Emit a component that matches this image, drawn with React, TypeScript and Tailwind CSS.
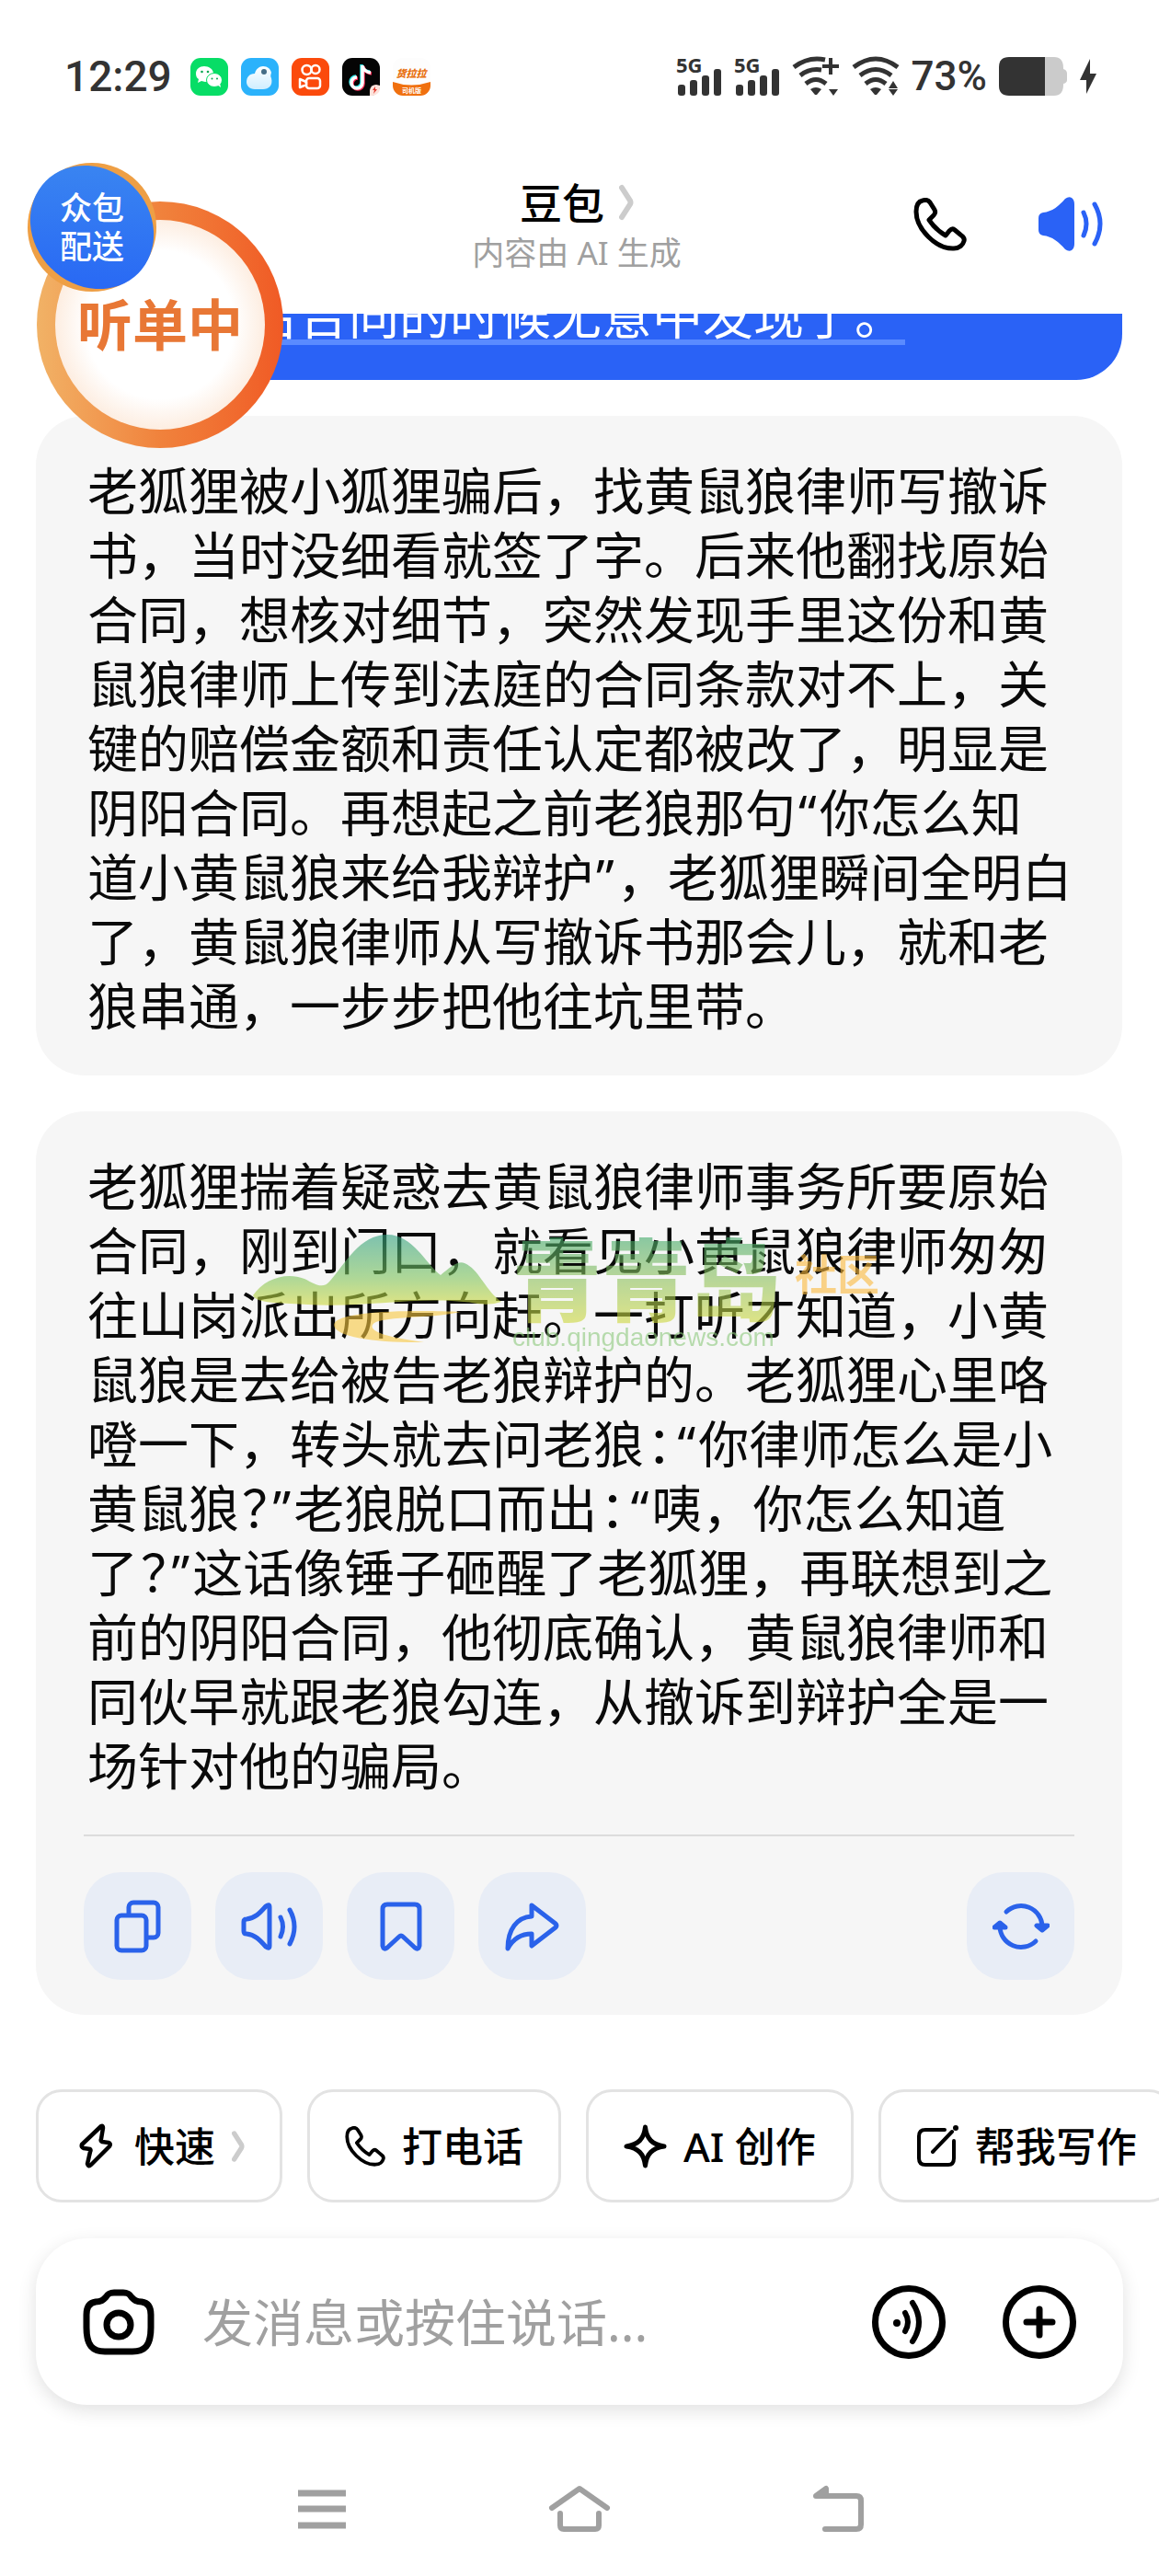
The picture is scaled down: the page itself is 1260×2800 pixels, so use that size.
import type { ReactNode } from "react";

const firstMessage = [
  "老狐狸被小狐狸骗后，找黄鼠狼律师写撤诉",
  "书，当时没细看就签了字。后来他翻找原始",
  "合同，想核对细节，突然发现手里这份和黄",
  "鼠狼律师上传到法庭的合同条款对不上，关",
  "键的赔偿金额和责任认定都被改了，明显是",
  "阴阳合同。再想起之前老狼那句“你怎么知",
  "道小黄鼠狼来给我辩护”，老狐狸瞬间全明白",
  "了，黄鼠狼律师从写撤诉书那会儿，就和老",
  "狼串通，一步步把他往坑里带。",
];

const secondMessage = [
  "老狐狸揣着疑惑去黄鼠狼律师事务所要原始",
  "合同，刚到门口，就看见小黄鼠狼律师匆匆",
  "往山岗派出所方向赶。一打听才知道，小黄",
  "鼠狼是去给被告老狼辩护的。老狐狸心里咯",
  "噔一下，转头就去问老狼：“你律师怎么是小",
  "黄鼠狼？”老狼脱口而出：“咦，你怎么知道",
  "了？”这话像锤子砸醒了老狐狸，再联想到之",
  "前的阴阳合同，他彻底确认，黄鼠狼律师和",
  "同伙早就跟老狼勾连，从撤诉到辩护全是一",
  "场针对他的骗局。",
];

interface IconProps {
  className?: string;
}

function PhoneIcon({ className }: IconProps) {
  return (
    <svg viewBox="0 0 58 58" className={className} fill="none" stroke="currentColor" strokeWidth="5" strokeLinejoin="round">
      <path d="M10 3C5 4 3 9 3 15C3 34 25 56 44 55C50 55 54 51 55 47C56 44 54 42 51 40L45 35C43 33 41 34 39 36L35 41C28 37 21 30 17 24L22 19C24 17 24 15 23 13L18 5C16 2 13 2 10 3Z" />
    </svg>
  );
}

function SpeakerSolidIcon({ className }: IconProps) {
  return (
    <svg viewBox="0 0 71 59" className={className} fill="none" stroke="currentColor" strokeWidth="5" strokeLinecap="round">
      <path
        stroke="none"
        fill="currentColor"
        d="M0 23Q0 18 5 17C15 16 22 10 29 2Q33-1 36 1Q39 3 39 8V51Q39 56 36 58Q33 60 29 57C22 49 15 43 5 42Q0 41 0 36Z"
      />
      <path d="M49 17Q55 29 49 42M61 8Q73 29 61 51" />
    </svg>
  );
}

function ChevronIcon({ className }: IconProps) {
  return (
    <svg viewBox="0 0 16 40" className={className} fill="none" stroke="#cccccc" strokeWidth="6" strokeLinecap="round" strokeLinejoin="round">
      <path d="M3 4L12 18Q13 20 12 22L3 36" />
    </svg>
  );
}

function CopyIcon() {
  return (
    <svg viewBox="0 0 52 58" className="h-[58px] w-[52px]" fill="none" stroke="currentColor" strokeWidth="5">
      <rect x="3" y="17" width="32" height="38" rx="5" />
      <path d="M16 15V8a5 5 0 0 1 5-5H43a5 5 0 0 1 5 5V36a5 5 0 0 1-5 5H37" />
    </svg>
  );
}

function SpeakerIcon() {
  return (
    <svg viewBox="0 0 62 52" className="h-[52px] w-[62px]" fill="none" stroke="currentColor" strokeWidth="5" strokeLinecap="round" strokeLinejoin="round">
      <path d="M3 21Q3 18 6 18C15 17 20 12 27 4Q31 1 31 5V47Q31 51 27 48C20 40 15 35 6 34Q3 34 3 31Z" />
      <path d="M43 16Q48 26 43 37M53 8Q63 26 53 45" />
    </svg>
  );
}

function BookmarkIcon() {
  return (
    <svg viewBox="0 0 46 54" className="h-[54px] w-[46px]" fill="none" stroke="currentColor" strokeWidth="5" strokeLinejoin="round">
      <path d="M8 3H38Q43 3 43 8V48Q42 53 38 50L25 38Q23 36 21 38L8 50Q4 53 3 48V8Q3 3 8 3Z" />
    </svg>
  );
}

function ShareIcon() {
  return (
    <svg viewBox="0 0 60 54" className="h-[54px] w-[60px]" fill="none" stroke="currentColor" strokeWidth="5" strokeLinejoin="round">
      <path d="M29 4L55 24Q57 26 55 28L29 48V35C17 35 9 40 3 51C3 30 13 17 29 16Z" />
    </svg>
  );
}

function RefreshIcon() {
  return (
    <svg viewBox="0 0 62 52" className="h-[52px] w-[62px]" fill="none" stroke="currentColor" strokeWidth="5" strokeLinecap="round" strokeLinejoin="round">
      <path d="M15 10A23 23 0 0 1 54 26M47 42A23 23 0 0 1 8 26" />
      <path d="M48 25H60L54 30ZM2 27H14L8 22Z" fill="currentColor" />
    </svg>
  );
}

function BoltIcon() {
  return (
    <svg viewBox="0 0 48 49" className="h-[49px] w-12" fill="none" stroke="currentColor" strokeWidth="4.5" strokeLinejoin="round">
      <path d="M30 3L9 23Q8 26 11 27L18 28Q19 29 18 31L15 44Q16 48 19 45L39 25Q41 22 38 21L31 20Q29 19 30 17L32 5Q32 2 30 3Z" />
    </svg>
  );
}

function SparkleIcon() {
  return (
    <svg viewBox="0 0 47 48" className="h-12 w-[47px]" fill="none" stroke="currentColor" strokeWidth="5" strokeLinejoin="round">
      <path d="M23.5 3C25 16 31 22 44 24C31 26 25 32 23.5 45C22 32 16 26 3 24C16 22 22 16 23.5 3Z" />
    </svg>
  );
}

function EditIcon() {
  return (
    <svg viewBox="0 0 46 46" className="h-[46px] w-[46px]" fill="none" stroke="currentColor" strokeWidth="4" strokeLinecap="round">
      <path d="M31 5H10Q3 5 3 12V36Q3 43 10 43H35Q41 43 41 36V17" />
      <path d="M18 29L39 7" />
      <circle cx="43" cy="3" r="3" fill="currentColor" stroke="none" />
    </svg>
  );
}

function CameraIcon() {
  return (
    <svg viewBox="0 0 78 72" className="h-[72px] w-[78px]" fill="none" stroke="currentColor" strokeWidth="7" strokeLinejoin="round">
      <path d="M14 14C20 14 22 12 25 9C28 4 31 4 34 4H44C47 4 50 4 53 9C56 12 58 14 64 14C71 15 74 20 74 28V42C74 62 67 68 54 68H24C11 68 4 62 4 42V28C4 20 7 15 14 14Z" />
      <circle cx="39" cy="39" r="13" />
    </svg>
  );
}

function VoiceIcon() {
  return (
    <svg viewBox="0 0 80 80" className="h-20 w-20" fill="none" stroke="currentColor" strokeWidth="6" strokeLinecap="round">
      <circle cx="40" cy="40" r="36.5" strokeWidth="7" />
      <circle cx="27" cy="41" r="4" fill="currentColor" stroke="none" />
      <path d="M36 30Q42 40 36 50M44 19Q58 40 44 61" />
    </svg>
  );
}

function PlusIcon() {
  return (
    <svg viewBox="0 0 80 80" className="h-20 w-20" fill="none" stroke="currentColor" strokeWidth="7" strokeLinecap="round">
      <circle cx="40" cy="40" r="36.5" />
      <path d="M40 26V54M26 40H54" />
    </svg>
  );
}

function AppIcons() {
  return (
    <div className="flex gap-[14px]">
      <svg viewBox="0 0 41 41" className="h-[41px] w-[41px]">
        <rect width="41" height="41" rx="11" fill="#07dd66" />
        <path d="M15 9c-5 0-9 3-9 8 0 3 1 5 3 6l-1 4 4-2 4 1c5 0 9-4 9-9 0-5-5-8-10-8z" fill="#fff" />
        <ellipse cx="26" cy="24" rx="8.500" ry="7.500" fill="#fff" stroke="#07dd66" />
        <path d="M29 29l4 3-1-5z" fill="#fff" />
        <g fill="#07a650">
          <circle cx="12.500" cy="15" r="1.300" />
          <circle cx="19" cy="15" r="1.300" />
          <circle cx="23.500" cy="22.500" r="1" />
          <circle cx="29" cy="22.500" r="1" />
        </g>
      </svg>
      <svg viewBox="0 0 41 41" className="h-[41px] w-[41px]">
        <defs>
          <linearGradient id="cloud" x1="0" y1="0" x2="0" y2="1">
            <stop offset="0" stopColor="#fff" />
            <stop offset="1" stopColor="#cfeeff" />
          </linearGradient>
        </defs>
        <rect width="41" height="41" rx="11" fill="#2bb2fb" />
        <path d="M6 26c0-5 3-9 9-9 1-5 5-8 9-8 5 0 8 3 9 7-1 3-1 4 0 6 2 8-3 12-9 12H15c-6 0-9-4-9-8z" fill="url(#cloud)" />
        <circle cx="25" cy="15" r="3" fill="#456d86" />
      </svg>
      <svg viewBox="0 0 41 41" className="h-[41px] w-[41px]" fill="none" stroke="#fff" strokeWidth="2.500">
        <rect width="41" height="41" rx="11" fill="#fb4a0c" stroke="none" />
        <circle cx="16.500" cy="13" r="5" />
        <circle cx="26" cy="12.500" r="4.500" />
        <rect x="16" y="22" width="15" height="11" rx="3" />
        <path d="M16 26l-7-3v9l7-3z" strokeLinejoin="round" />
      </svg>
      <svg viewBox="0 0 41 41" className="h-[41px] w-[41px]">
        <rect width="41" height="41" rx="11" fill="#050505" />
        <g fill="none" strokeWidth="3.500">
          <path d="M21 7v19a6 6 0 1 1-6-6M21 8q2 6 9 7" stroke="#2ee6e6" />
          <path d="M23 9v19a6 6 0 1 1-6-6M23 10q2 6 9 7" stroke="#fb2c55" />
          <path d="M22 8v19a6 6 0 1 1-6-6M22 9q2 6 9 7" stroke="#fff" />
        </g>
        <path d="M30 41V35q1-6 7-6l4 1v2q0 8-8 9z" fill="#fde3dc" />
        <path d="M36 31l-3 4h2l-1 4 4-5h-2z" fill="#e23b2e" />
      </svg>
      <svg viewBox="0 0 41 41" className="h-[41px] w-[41px]">
        <rect width="41" height="41" rx="11" fill="#fdfdfd" />
        <path d="M0 26q20 7 41 0v4a11 11 0 0 1-11 11H11A11 11 0 0 1 0 30z" fill="#f0700f" />
        <text x="20" y="21" textAnchor="middle" fontSize="11" fontWeight="900" fontStyle="italic" fill="#e8700f">货拉拉</text>
        <text x="20.500" y="38" textAnchor="middle" fontSize="7" fontWeight="700" fill="#fff">司机版</text>
      </svg>
    </div>
  );
}

function SignalIcon() {
  return (
    <svg viewBox="0 0 50 44" className="h-11 w-[50px] overflow-visible" fill="#333">
      <text x="0" y="18" fontSize="22" fontWeight="700" className="font-['Noto_Sans']">5G</text>
      <rect x="2" y="31" width="8" height="12" rx="3" />
      <rect x="15" y="26" width="8" height="17" rx="3" />
      <rect x="28" y="21" width="8" height="22" rx="3" />
      <rect x="41" y="14" width="8" height="29" rx="3" />
    </svg>
  );
}

function WifiIcon({ plus = false }: { plus?: boolean }) {
  return (
    <svg viewBox="0 0 52 44" className="h-11 w-[52px]" fill="none" stroke="#333" strokeWidth="5">
      <path d={plus ? "M2 12Q18 0 36 4" : "M2 12Q26-6 50 12"} />
      <path d={plus ? "M9 21Q19 13 32 15" : "M9 21Q26 8 43 21"} />
      <path d="M15 30Q26 21 37 30" />
      <path d="M20 36Q26 32 32 36L27 42H25Z" fill="#333" stroke="none" />
      {plus && <path d="M42 2V20M33 11H51" strokeWidth="4" />}
      {!plus && <path d="M40 35L45 27L50 35Z" fill="#333" stroke="none" />}
      <path d="M40 36H50L45 43Z" fill="#333" stroke="none" />
    </svg>
  );
}

function StatusBar() {
  return (
    <div className="flex h-[166px] items-center justify-between pl-[70px] pr-[68px] text-[#333]">
      <div className="flex items-center gap-5">
        <span className="font-['Roboto'] text-[46px] font-medium leading-none">12:29</span>
        <AppIcons />
      </div>
      <div className="flex items-center gap-[13px]">
        <SignalIcon />
        <SignalIcon />
        <WifiIcon plus />
        <WifiIcon />
        <span className="font-['Roboto'] text-[44px] font-medium leading-none">73%</span>
        <svg viewBox="0 0 75 42" className="h-[42px] w-[75px]">
          <path d="M50 0H60Q70 0 70 12V13Q74 14 74 18V25Q74 28 70 29V30Q70 42 60 42H50Z" fill="#cbcbcb" />
          <path d="M11 0H50V42H11Q0 42 0 31V11Q0 0 11 0Z" fill="#333" />
        </svg>
        <svg viewBox="0 0 18 38" className="h-[38px] w-[18px]">
          <path d="M11 0L0 23H7L7 38L18 16H11Z" fill="#333" />
        </svg>
      </div>
    </div>
  );
}

function Header() {
  return (
    <header className="grid h-[175px] grid-cols-[1fr_auto_1fr] items-start pl-[54px] pr-[60px] pt-5">
      <div />
      <div className="flex flex-col items-center">
        <button type="button" className="flex items-center gap-4 leading-[68px]">
          <h1 className="text-[46px] font-medium leading-[68px] text-black">豆包</h1>
          <ChevronIcon className="h-10 w-4" />
        </button>
        <p className="text-[35px] leading-[42px] text-[#a0a0a0]">内容由 AI 生成</p>
      </div>
      <div className="flex items-center justify-end gap-[78px] pt-7">
        <button type="button" aria-label="打电话">
          <PhoneIcon className="h-[58px] w-[58px]" />
        </button>
        <button type="button" aria-label="朗读" className="text-[#2a62f6]">
          <SpeakerSolidIcon className="h-[59px] w-[71px]" />
        </button>
      </div>
    </header>
  );
}

function RunnerBadge() {
  return (
    <div className="absolute left-[30px] top-[177px]">
      <div className="ml-[10px] mt-[42px] flex h-[268px] w-[268px] rounded-full bg-linear-to-r from-[#f1b266] via-[#f0823c] to-[#f05a25] p-5">
        <div className="flex flex-1 items-center justify-center rounded-full bg-[radial-gradient(circle,#fff_50%,#fdeee2_70%)]">
          <span className="text-[60px] font-bold leading-none text-[#e87735]">听单中</span>
        </div>
      </div>
      <div className="absolute left-0 top-0 flex h-[140px] w-[140px] items-center justify-center rounded-full bg-[#ee9f45]">
        <svg viewBox="0 0 140 140" className="absolute inset-0 h-full w-full">
          <defs>
            <linearGradient id="disc" x1="0" y1="0" x2="1" y2="1">
              <stop offset="0" stopColor="#3d8af0" />
              <stop offset="1" stopColor="#2563f5" />
            </linearGradient>
          </defs>
          <ellipse cx="70" cy="70" rx="71" ry="63" transform="rotate(45 70 70)" fill="url(#disc)" />
        </svg>
        <span className="relative text-center text-[35px] font-medium leading-[42px] text-white">
          众包
          <br />
          配送
        </span>
      </div>
    </div>
  );
}

// Quotes come from the Latin face; the full-width colon and question mark are set half-width.
function MessageText({ lines }: { lines: string[] }) {
  return (
    <p className="whitespace-nowrap pl-1 text-[55px] leading-[70px] text-[#0a0a0a]">
      {lines.map((line) => (
        <span key={line} className="block">
          {line.split(/([：？“”])/).map((part, i) =>
            i % 2 ? (
              <span key={i} className="px-[3px] [font-feature-settings:'halt']">
                {part}
              </span>
            ) : (
              part
            ),
          )}
        </span>
      ))}
    </p>
  );
}

function Watermark() {
  return (
    <div className="pointer-events-none absolute left-[236px] top-[134px] flex select-none items-start gap-3 opacity-60">
      <svg viewBox="0 0 270 120" className="h-[120px] w-[270px]">
        <defs>
          <linearGradient id="hill" x1="0" y1="0" x2="0" y2="1">
            <stop offset="0" stopColor="#2fa080" />
            <stop offset="0.6" stopColor="#7cc35a" />
            <stop offset="1" stopColor="#cfd93a" />
          </linearGradient>
        </defs>
        <path d="M0 66C12 48 36 40 56 48C68 54 76 60 84 50C100 32 116 0 146 0C174 0 188 32 204 44C214 36 222 28 230 31C246 38 252 60 270 73Q256 78 238 74C180 66 120 80 60 76C36 74 4 76 0 66Z" fill="url(#hill)" />
        <path d="M226 84C180 82 90 82 88 98C88 112 140 118 186 117C150 112 126 106 130 98C136 88 190 92 226 84Z" fill="#f8c840" />
      </svg>
      <div>
        <div className="flex items-start gap-4">
          <span className="bg-linear-to-b from-[#3aa86a] to-[#cfd93a] bg-clip-text text-[97px] font-black leading-[97px] text-transparent">
            青青岛
          </span>
          <span className="pt-4 text-[46px] font-bold leading-[52px] text-[#fbb93c]">社区</span>
        </div>
        <p className="font-['Liberation_Sans'] text-[28px] leading-[30px] text-[#8cc97c]">
          club.qingdaonews.com
        </p>
      </div>
    </div>
  );
}

function ActionButton({ label, children }: { label: string; children: ReactNode }) {
  return (
    <button
      type="button"
      aria-label={label}
      className="flex h-[117px] w-[117px] items-center justify-center rounded-[40px] bg-[#e8edf6] text-[#2a62ea]"
    >
      {children}
    </button>
  );
}

function Chip({ icon, label, chevron = false }: { icon: ReactNode; label: string; chevron?: boolean }) {
  return (
    <button
      type="button"
      className="flex h-[123px] shrink-0 items-center gap-[18px] rounded-[28px] border-3 border-[#e3e3e3] px-[38px] text-[44px] font-medium leading-none text-black"
    >
      {icon}
      <span>{label}</span>
      {chevron && <ChevronIcon className="h-9 w-[14px]" />}
    </button>
  );
}

function Composer() {
  return (
    <form className="mx-[39px] mt-[39px] flex h-[181px] items-center rounded-[56px] bg-white px-[51px] shadow-[0_6px_20px_rgba(0,0,0,0.12)]">
      <button type="button" aria-label="拍照">
        <CameraIcon />
      </button>
      <input
        type="text"
        aria-label="发消息"
        placeholder="发消息或按住说话..."
        className="ml-[52px] min-w-0 flex-1 bg-transparent text-[55px] leading-[70px] outline-none placeholder:text-[#a0a0a0]"
      />
      <div className="flex gap-[62px]">
        <button type="button" aria-label="语音">
          <VoiceIcon />
        </button>
        <button type="button" aria-label="更多">
          <PlusIcon />
        </button>
      </div>
    </form>
  );
}

function SystemNav() {
  return (
    <nav className="mt-[87px] flex items-center justify-center gap-[219px] pl-1 text-[#a0a0a0]">
      <button type="button" aria-label="任务">
        <svg viewBox="0 0 54 52" className="h-[52px] w-[54px]" fill="none" stroke="currentColor" strokeWidth="7">
          <path d="M1 9H53M1 26H53M1 44H53" />
        </svg>
      </button>
      <button type="button" aria-label="主屏幕">
        <svg viewBox="0 0 68 52" className="h-[52px] w-[68px]" fill="none" stroke="currentColor" strokeWidth="6" strokeLinecap="round" strokeLinejoin="round">
          <path d="M4 25L34 4L64 25" />
          <path d="M13 31V44Q13 48 17 48H51Q55 48 55 44V31" />
        </svg>
      </button>
      <button type="button" aria-label="返回">
        <svg viewBox="0 0 58 52" className="h-[52px] w-[58px]" fill="none" stroke="currentColor" strokeWidth="6" strokeLinecap="round" strokeLinejoin="round">
          <path d="M14 48H48Q53 48 53 43V17Q53 12 48 12H4L15 4V12" />
        </svg>
      </button>
    </nav>
  );
}

export default function App() {
  return (
    <div className="relative min-h-screen overflow-hidden bg-white font-['Noto_Sans','Noto_Sans_CJK_SC',sans-serif]" lang="zh-CN">
      <StatusBar />
      <Header />

      <main className="pl-[39px] pr-10">
        <div className="ml-[131px] flex h-[72px] items-end overflow-hidden rounded-br-[50px] bg-[#2a62f6] pb-[38px] pl-[99px]">
          <p className="border-b-6 border-[#5a8bff] text-[55px] leading-[54px] text-white">给合同的时候无意中发现了。</p>
        </div>

        <article className="mt-[39px] rounded-[54px] bg-[#f6f6f6] px-[52px] pb-[41px] pt-[46px]">
          <MessageText lines={firstMessage} />
        </article>

        <article className="relative mt-[39px] rounded-[54px] bg-[#f6f6f6] px-[52px] pb-[38px] pt-[46px]">
          <MessageText lines={secondMessage} />
          <Watermark />
          <div className="mt-10 flex items-center border-t-2 border-[#dcdcdc] pt-[39px]">
            <div className="flex gap-[26px]">
              <ActionButton label="复制">
                <CopyIcon />
              </ActionButton>
              <ActionButton label="朗读">
                <SpeakerIcon />
              </ActionButton>
              <ActionButton label="收藏">
                <BookmarkIcon />
              </ActionButton>
              <ActionButton label="分享">
                <ShareIcon />
              </ActionButton>
            </div>
            <div className="ml-auto">
              <ActionButton label="重新生成">
                <RefreshIcon />
              </ActionButton>
            </div>
          </div>
        </article>
      </main>

      <div className="mt-[81px] flex gap-[27px] overflow-hidden pl-[39px]">
        <Chip icon={<BoltIcon />} label="快速" chevron />
        <Chip icon={<PhoneIcon className="h-11 w-11" />} label="打电话" />
        <Chip icon={<SparkleIcon />} label="AI 创作" />
        <Chip icon={<EditIcon />} label="帮我写作" />
      </div>

      <Composer />
      <SystemNav />
      <RunnerBadge />
    </div>
  );
}
